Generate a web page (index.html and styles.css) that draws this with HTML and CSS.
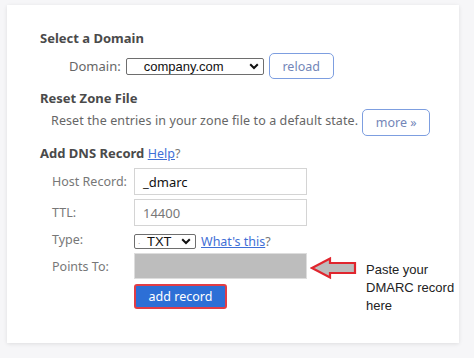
FILE: index.html
```html
<!DOCTYPE html>
<html>
<head>
<meta charset="utf-8">
<link rel="stylesheet" href="styles.css">
</head>
<body>
<div class="panel">
  <h2 class="heading">Select a Domain</h2>
  <div class="domain-row">
    <span class="label">Domain:</span>
    <div class="select domain-select"><span class="sel-text">company.com</span><svg class="chev" width="10" height="7" viewBox="0 0 10 7"><path d="M1.2 1.2 L5 5 L8.8 1.2" fill="none" stroke="#111" stroke-width="2"/></svg></div>
    <button class="btn-outline reload">reload</button>
  </div>
  <h2 class="heading h-reset">Reset Zone File</h2>
  <div class="reset-row">
    <span class="text">Reset the entries in your zone file to a default state.</span>
    <button class="btn-outline more">more »</button>
  </div>
  <h2 class="heading h-dns">Add DNS Record <a class="link">Help</a><span class="q">?</span></h2>
  <div class="form">
    <span class="flabel">Host Record:</span>
    <div class="input">_dmarc</div>
    <span class="flabel">TTL:</span>
    <div class="input muted">14400</div>
    <span class="flabel">Type:</span>
    <div class="type-cell">
      <div class="select type-select"><span class="dot">.</span><span class="sel-text">TXT</span><svg class="chev" width="10" height="7" viewBox="0 0 10 7"><path d="M1.2 1.2 L5 5 L8.8 1.2" fill="none" stroke="#111" stroke-width="2"/></svg></div>
      <a class="link">What's this</a><span class="q">?</span>
    </div>
    <span class="flabel">Points To:</span>
    <div class="points-cell">
      <div class="input gray"></div>
      <div class="note">
        <svg class="arrow" width="48" height="24" viewBox="0 0 48 24"><path d="M2 12 L20 2.5 L20 7 L45 7 L45 17 L20 17 L20 21.5 Z" fill="#bcbcbc" stroke="#e0262e" stroke-width="2.2" stroke-linejoin="miter"/></svg>
        <p class="note-text">Paste your<br>DMARC record<br>here</p>
      </div>
    </div>
    <span></span>
    <div><button class="btn-add">add record</button></div>
  </div>
</div>
</body>
</html>
```
FILE: styles.css
```css
* { box-sizing: border-box; }
html, body { margin: 0; padding: 0; }
body {
  width: 474px;
  height: 358px;
  background: #f6f6f8;
  font-family: "Noto Sans", "Open Sans", sans-serif;
  color: #555;
  overflow: hidden;
  padding: 5px 0 0 7px;
}
.panel {
  width: 452px;
  height: 338px;
  background: #fff;
  box-shadow: 0 1px 4px rgba(0,0,0,0.10);
  padding: 25px 0 0 33px;
}
.heading {
  margin: 0;
  font-size: 13px;
  font-weight: 700;
  color: #4a4a4a;
  line-height: 16px;
}
.domain-row {
  display: flex;
  align-items: center;
  margin: 7px 0 0 29px;
  height: 26px;
}
.label {
  font-size: 13px;
  color: #666;
  margin-right: 5px;
}
.select {
  display: flex;
  align-items: center;
  border: 1px solid #6e6e6e;
  border-radius: 2px;
  background: #fff;
  color: #111;
  font-family: "Liberation Sans", Arial, sans-serif;
}
.domain-select {
  width: 138px;
  height: 17px;
  font-size: 13px;
  padding: 0 4px 0 17px;
}
.sel-text { flex: 1; line-height: 15px; }
.chev { flex: none; }
.btn-outline {
  font-family: "Noto Sans", "Open Sans", sans-serif;
  background: #fff;
  border: 1.5px solid #7d9ee0;
  border-radius: 5px;
  color: #7386b8;
  font-size: 12.5px;
  padding: 0;
  cursor: pointer;
}
.reload {
  width: 65px;
  height: 26px;
  margin-left: 5px;
}
.h-reset { margin-top: 11px; }
.reset-row {
  display: flex;
  align-items: center;
  margin: 1px 0 0 11px;
  height: 27px;
}
.text {
  font-size: 12.5px;
  letter-spacing: 0.1px;
  color: #666;
}
.more {
  width: 68px;
  height: 27px;
  margin-left: 4px;
  position: relative;
  top: 2px;
}
.h-dns { margin-top: 11px; }
.link {
  color: #3f6fd6;
  text-decoration: underline;
  font-weight: 400;
  font-size: 12.5px;
}
.q { font-weight: 400; color: #777; font-size: 12.5px; }
.form {
  display: grid;
  grid-template-columns: 82px 1fr;
  grid-auto-rows: auto;
  margin: 6px 0 0 12px;
  align-items: center;
  row-gap: 4px;
}
.flabel {
  font-size: 12.5px;
  color: #777;
  align-self: center;
}
.input {
  width: 173px;
  height: 27px;
  border: 1px solid #d4d4d4;
  background: #fff;
  font-size: 13px;
  color: #111;
  padding: 4px 0 0 8px;
  font-family: "Noto Sans", "Open Sans", sans-serif;
}
.input.muted { color: #777; }
.input.gray {
  background: #bdbdbd;
  border-color: #ddd;
  height: 26px;
}
.type-cell {
  display: flex;
  align-items: center;
  height: 15px;
  margin: 4px 0 0;
}
.type-select {
  width: 62px;
  height: 15px;
  font-size: 13px;
  padding: 0 4px 0 3px;
}
.type-select .dot { font-size: 8px; width: 9px; color: #888; }
.type-cell .link { margin-left: 5px; }
.points-cell {
  display: flex;
  align-items: flex-start;
  position: relative;
}
.note {
  position: absolute;
  left: 176px;
  top: 3px;
  display: flex;
  align-items: flex-start;
}
.note-text {
  margin: 5px 0 0 8px;
  font-family: "Liberation Sans", Arial, sans-serif;
  font-size: 13px;
  line-height: 18px;
  color: #222;
}
.btn-add {
  margin-top: 1px;
  width: 93px;
  height: 25px;
  background: #2d6fd6;
  border: 2px solid #e23d45;
  border-radius: 3px;
  color: #fff;
  font-family: "Noto Sans", "Open Sans", sans-serif;
  font-size: 12.5px;
  padding: 0;
}
```
